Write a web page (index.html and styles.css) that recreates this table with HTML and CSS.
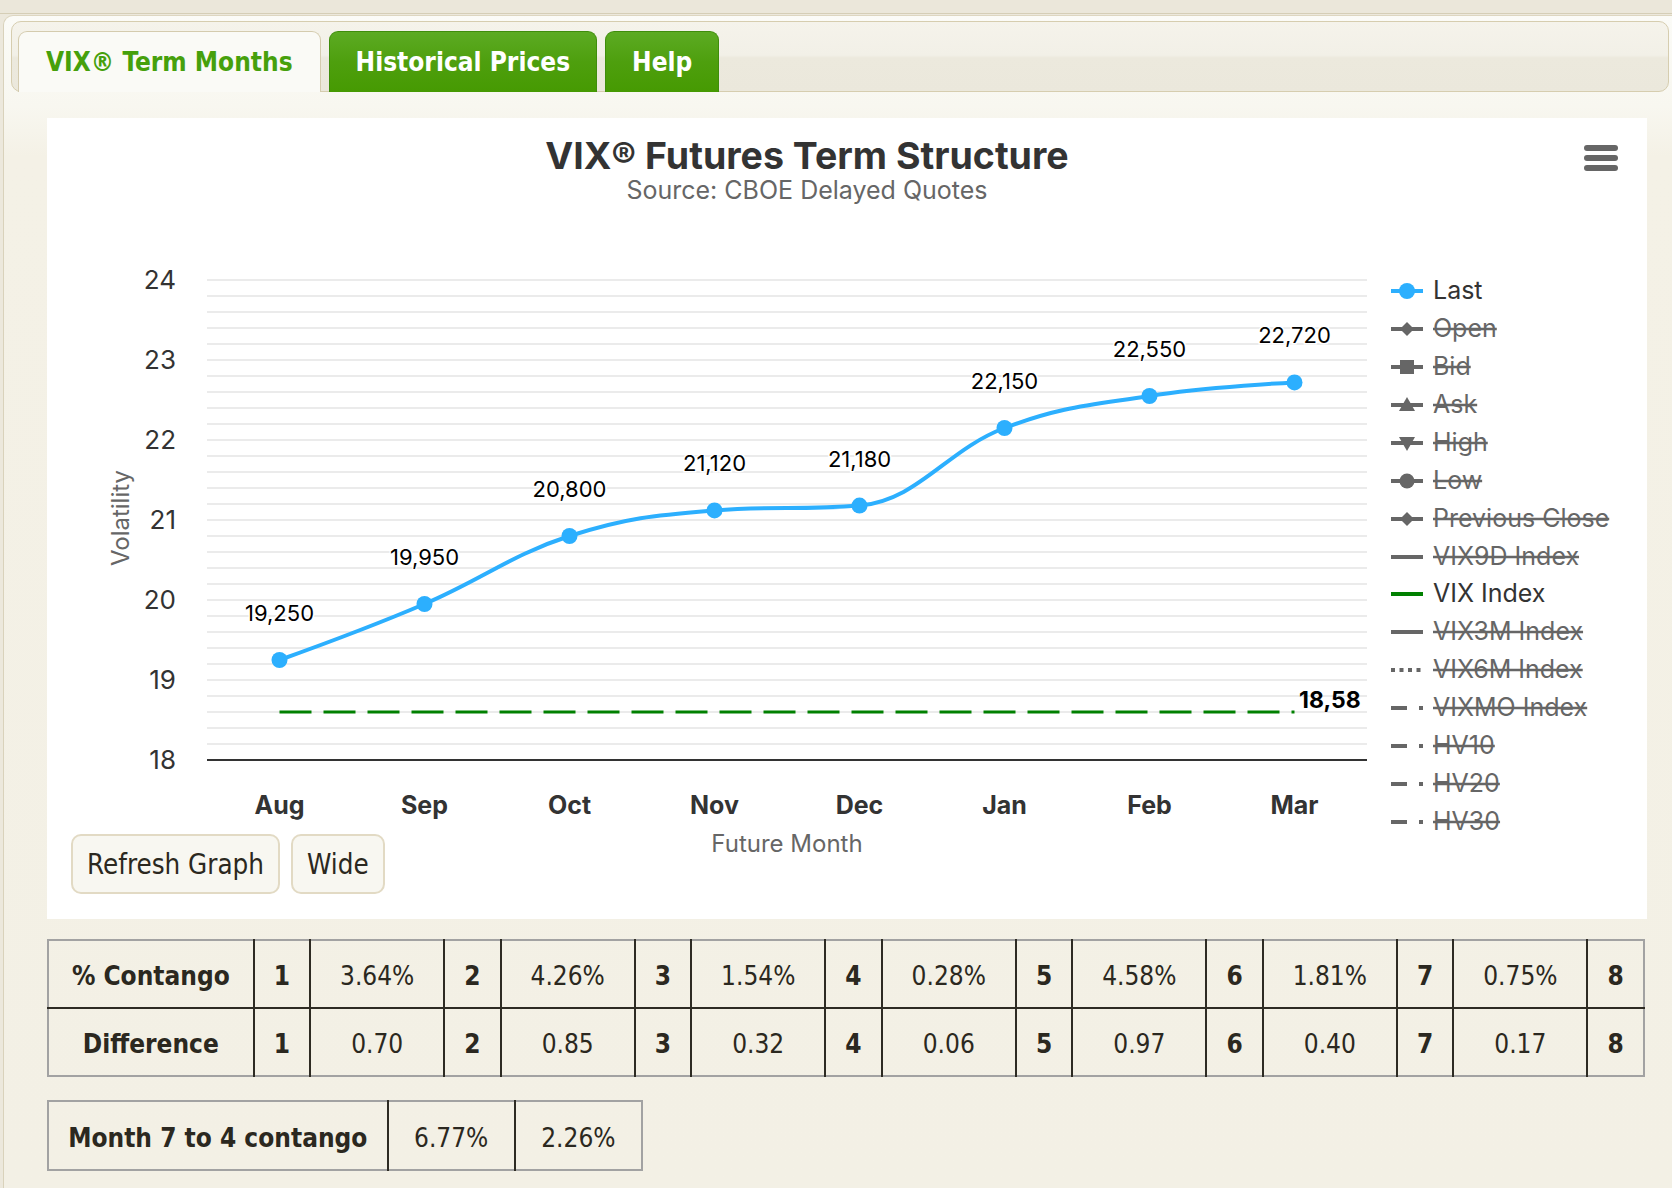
FILE: index.html
```html
<!DOCTYPE html>
<html lang="en">
<head>
<meta charset="utf-8">
<title>VIX Futures Term Structure</title>
<link rel="stylesheet" href="styles.css">
</head>
<body>
<div class="topbar"></div>
<div class="page">
  <nav class="tabbar">
    <a class="tab tab-active">VIX® Term Months</a>
    <a class="tab">Historical Prices</a>
    <a class="tab">Help</a>
  </nav>

  <div class="card">
    <svg class="chart" width="1600" height="716" viewBox="47 118 1600 716" xmlns="http://www.w3.org/2000/svg">
      <text class="ch-title" x="807" y="169" text-anchor="middle">VIX® Futures Term Structure</text>
      <text class="ch-sub" x="807" y="199" text-anchor="middle">Source: CBOE Delayed Quotes</text>
      <g class="menu">
        <rect x="1584" y="145" width="34" height="6" rx="3"/>
        <rect x="1584" y="155" width="34" height="6" rx="3"/>
        <rect x="1584" y="165" width="34" height="6" rx="3"/>
      </g>

      <g class="grid">
        <line x1="207" x2="1367" y1="280" y2="280"/>
        <line x1="207" x2="1367" y1="296" y2="296"/>
        <line x1="207" x2="1367" y1="312" y2="312"/>
        <line x1="207" x2="1367" y1="328" y2="328"/>
        <line x1="207" x2="1367" y1="344" y2="344"/>
        <line x1="207" x2="1367" y1="360" y2="360"/>
        <line x1="207" x2="1367" y1="376" y2="376"/>
        <line x1="207" x2="1367" y1="392" y2="392"/>
        <line x1="207" x2="1367" y1="408" y2="408"/>
        <line x1="207" x2="1367" y1="424" y2="424"/>
        <line x1="207" x2="1367" y1="440" y2="440"/>
        <line x1="207" x2="1367" y1="456" y2="456"/>
        <line x1="207" x2="1367" y1="472" y2="472"/>
        <line x1="207" x2="1367" y1="488" y2="488"/>
        <line x1="207" x2="1367" y1="504" y2="504"/>
        <line x1="207" x2="1367" y1="520" y2="520"/>
        <line x1="207" x2="1367" y1="536" y2="536"/>
        <line x1="207" x2="1367" y1="552" y2="552"/>
        <line x1="207" x2="1367" y1="568" y2="568"/>
        <line x1="207" x2="1367" y1="584" y2="584"/>
        <line x1="207" x2="1367" y1="600" y2="600"/>
        <line x1="207" x2="1367" y1="616" y2="616"/>
        <line x1="207" x2="1367" y1="632" y2="632"/>
        <line x1="207" x2="1367" y1="648" y2="648"/>
        <line x1="207" x2="1367" y1="664" y2="664"/>
        <line x1="207" x2="1367" y1="680" y2="680"/>
        <line x1="207" x2="1367" y1="696" y2="696"/>
        <line x1="207" x2="1367" y1="712" y2="712"/>
        <line x1="207" x2="1367" y1="728" y2="728"/>
        <line x1="207" x2="1367" y1="744" y2="744"/>
      </g>
      <line class="axis" x1="207" x2="1367" y1="760" y2="760"/>

      <g class="ylab">
        <text x="176" y="289">24</text>
        <text x="176" y="369">23</text>
        <text x="176" y="449">22</text>
        <text x="176" y="529">21</text>
        <text x="176" y="609">20</text>
        <text x="176" y="689">19</text>
        <text x="176" y="769">18</text>
      </g>
      <text class="ytitle" x="0" y="0" transform="translate(129 518) rotate(-90)" text-anchor="middle">Volatility</text>

      <g class="xlab">
        <text x="279.5" y="814">Aug</text>
        <text x="424.5" y="814">Sep</text>
        <text x="569.5" y="814">Oct</text>
        <text x="714.5" y="814">Nov</text>
        <text x="859.5" y="814">Dec</text>
        <text x="1004.5" y="814">Jan</text>
        <text x="1149.5" y="814">Feb</text>
        <text x="1294.5" y="814">Mar</text>
      </g>
      <text class="xtitle" x="787" y="852" text-anchor="middle">Future Month</text>

      <line class="vix" x1="279.5" x2="1294.5" y1="712" y2="712"/>
      <text class="vix-lab" x="1299" y="708">18,58</text>

      <path class="series" d="M279.5 660 C279.5 660 366.5 628.8 424.5 604 C482.5 579.2 511.5 554.72 569.5 536 C627.5 517.28 656.5 515.2 714.5 510.4 C772.5 505.6 801.5 510.4 859.5 505.6 C917.5 500.8 946.5 449.92 1004.5 428 C1062.5 406.08 1091.5 405.12 1149.5 396 C1207.5 386.88 1294.5 382.4 1294.5 382.4"/>
      <g class="markers">
        <circle cx="279.5" cy="660" r="8"/>
        <circle cx="424.5" cy="604" r="8"/>
        <circle cx="569.5" cy="536" r="8"/>
        <circle cx="714.5" cy="510.4" r="8"/>
        <circle cx="859.5" cy="505.6" r="8"/>
        <circle cx="1004.5" cy="428" r="8"/>
        <circle cx="1149.5" cy="396" r="8"/>
        <circle cx="1294.5" cy="382.4" r="8"/>
      </g>
      <g class="dlab">
        <text x="279.5" y="621">19,250</text>
        <text x="424.5" y="565">19,950</text>
        <text x="569.5" y="497">20,800</text>
        <text x="714.5" y="471">21,120</text>
        <text x="859.5" y="467">21,180</text>
        <text x="1004.5" y="389">22,150</text>
        <text x="1149.5" y="357">22,550</text>
        <text x="1294.5" y="343">22,720</text>
      </g>

      <g class="legend">
        <line class="lg-blue" x1="1391" x2="1423" y1="291" y2="291"/>
        <circle class="fill-blue" cx="1407" cy="291" r="8"/>
        <text class="lg-on" x="1433" y="299">Last</text>

        <line x1="1391" x2="1423" y1="329" y2="329"/>
        <polygon class="fill-gray" points="1407,322 1414,329 1407,336 1400,329"/>
        <text class="lg-off" x="1433" y="337">Open</text>

        <line x1="1391" x2="1423" y1="367" y2="367"/>
        <rect class="fill-gray" x="1400" y="360" width="14" height="14"/>
        <text class="lg-off" x="1433" y="375">Bid</text>

        <line x1="1391" x2="1423" y1="405" y2="405"/>
        <polygon class="fill-gray" points="1407,397 1415,411 1399,411"/>
        <text class="lg-off" x="1433" y="413">Ask</text>

        <line x1="1391" x2="1423" y1="443" y2="443"/>
        <polygon class="fill-gray" points="1399,437 1415,437 1407,451"/>
        <text class="lg-off" x="1433" y="451">High</text>

        <line x1="1391" x2="1423" y1="481" y2="481"/>
        <circle class="fill-gray" cx="1407" cy="481" r="7.5"/>
        <text class="lg-off" x="1433" y="489">Low</text>

        <line x1="1391" x2="1423" y1="519" y2="519"/>
        <polygon class="fill-gray" points="1407,512 1414,519 1407,526 1400,519"/>
        <text class="lg-off" x="1433" y="527">Previous Close</text>

        <line x1="1391" x2="1423" y1="557" y2="557"/>
        <text class="lg-off" x="1433" y="565">VIX9D Index</text>

        <line class="lg-green" x1="1391" x2="1423" y1="594" y2="594"/>
        <text class="lg-on" x="1433" y="602">VIX Index</text>

        <line x1="1391" x2="1423" y1="632" y2="632"/>
        <text class="lg-off" x="1433" y="640">VIX3M Index</text>

        <line class="lg-dot" x1="1391" x2="1423" y1="670" y2="670"/>
        <text class="lg-off" x="1433" y="678">VIX6M Index</text>

        <line class="lg-dashdot" x1="1391" x2="1423" y1="708" y2="708"/>
        <text class="lg-off" x="1433" y="716">VIXMO Index</text>

        <line class="lg-dashdot" x1="1391" x2="1423" y1="746" y2="746"/>
        <text class="lg-off" x="1433" y="754">HV10</text>

        <line class="lg-dashdot" x1="1391" x2="1423" y1="784" y2="784"/>
        <text class="lg-off" x="1433" y="792">HV20</text>

        <line class="lg-dashdot" x1="1391" x2="1423" y1="822" y2="822"/>
        <text class="lg-off" x="1433" y="830">HV30</text>
      </g>
    </svg>
    <div class="btn-row">
      <button class="btn">Refresh Graph</button>
      <button class="btn">Wide</button>
    </div>
  </div>

  <table class="stats">
    <colgroup>
      <col class="c-label">
      <col class="c-num"><col class="c-val">
      <col class="c-num"><col class="c-val">
      <col class="c-num"><col class="c-val">
      <col class="c-num"><col class="c-val">
      <col class="c-num"><col class="c-val">
      <col class="c-num"><col class="c-val">
      <col class="c-num"><col class="c-val">
      <col class="c-num">
    </colgroup>
    <tr>
      <th>% Contango</th>
      <th>1</th><td>3.64%</td>
      <th>2</th><td>4.26%</td>
      <th>3</th><td>1.54%</td>
      <th>4</th><td>0.28%</td>
      <th>5</th><td>4.58%</td>
      <th>6</th><td>1.81%</td>
      <th>7</th><td>0.75%</td>
      <th>8</th>
    </tr>
    <tr>
      <th>Difference</th>
      <th>1</th><td>0.70</td>
      <th>2</th><td>0.85</td>
      <th>3</th><td>0.32</td>
      <th>4</th><td>0.06</td>
      <th>5</th><td>0.97</td>
      <th>6</th><td>0.40</td>
      <th>7</th><td>0.17</td>
      <th>8</th>
    </tr>
  </table>

  <table class="stats stats-small">
    <colgroup>
      <col class="c-wide"><col class="c-pct"><col class="c-pct">
    </colgroup>
    <tr>
      <th>Month 7 to 4 contango</th>
      <td>6.77%</td>
      <td>2.26%</td>
    </tr>
  </table>
</div>
</body>
</html>
```

FILE: styles.css
```css
html, body {
  margin: 0;
  padding: 0;
}

body {
  background: #ece8dc;
  font-family: "DejaVu Sans Condensed", "DejaVu Sans", sans-serif;
  font-stretch: condensed;
  color: #2b2820;
}

.topbar {
  height: 13px;
  background: #ebe7da;
  border-bottom: 1px solid #d5ceb6;
}

.page {
  margin: 1px 0 0 3px;
  padding: 5px 3px 17px 7px;
  border-top: 1px solid #ddd6c0;
  border-left: 1px solid #d9d2bb;
  border-radius: 10px 0 0 0;
  background: linear-gradient(#fbfbf7 0, #f8f7f0 90px, #f4f1e6 140px, #f3f0e5 100%);
}

/* ---------- tabs ---------- */
.tabbar {
  display: flex;
  align-items: flex-end;
  gap: 8px;
  height: 61px;
  padding: 8px 0 0 6px;
  border: 1px solid #d6cdaf;
  border-radius: 10px;
  background: linear-gradient(#f5f3eb 0, #f2f0e7 48%, #ece9dd 52%, #ebe8dc 100%);
}

.tab {
  display: flex;
  align-items: center;
  height: 60px;
  margin-bottom: -1px;
  padding: 0 26px;
  border: 1px solid #3f8d0c;
  border-bottom: none;
  border-radius: 9px 9px 0 0;
  background: linear-gradient(#5cab23 0, #4e9f0e 50%, #469a02 100%);
  color: #fff;
  font-weight: bold;
  font-size: 26px;
  cursor: pointer;
}

.tab-active {
  padding: 0 27px;
  border-color: #d4cbae;
  background: #fafaf6;
  color: #46a00c;
}

/* ---------- chart card ---------- */
.card {
  box-sizing: border-box;
  height: 801px;
  margin: 26px 22px 0 36px;
  background: #fff;
}

.chart {
  display: block;
  overflow: visible;
  font-family: Inter, "Liberation Sans", sans-serif;
}

.ch-title {
  font-size: 37.5px;
  font-weight: 700;
  fill: #333;
}

.ch-sub {
  font-size: 25px;
  fill: #666;
}

.menu rect {
  fill: #666;
}

.grid line {
  stroke: #e4e4e4;
  stroke-width: 1.5;
}

.axis {
  stroke: #333;
  stroke-width: 2;
}

.ylab text {
  font-size: 26px;
  fill: #333;
  text-anchor: end;
}

.ytitle,
.xtitle {
  font-size: 24px;
  fill: #666;
}

.xlab text {
  font-size: 25px;
  font-weight: 700;
  fill: #333;
  text-anchor: middle;
}

.vix {
  stroke: #008000;
  stroke-width: 3;
  stroke-dasharray: 32 12;
}

.vix-lab {
  font-size: 23px;
  font-weight: 700;
  fill: #000;
}

.series {
  fill: none;
  stroke: #2caffe;
  stroke-width: 4;
  stroke-linecap: round;
}

.markers circle {
  fill: #2caffe;
}

.dlab text {
  font-size: 22px;
  fill: #000;
  text-anchor: middle;
  stroke: #fff;
  stroke-width: 3;
  paint-order: stroke;
}

.legend line {
  stroke: #666;
  stroke-width: 4;
}

.legend .lg-blue {
  stroke: #2caffe;
}

.legend .lg-green {
  stroke: #008000;
}

.legend .lg-dot {
  stroke-dasharray: 4 4.5;
}

.legend .lg-dashdot {
  stroke-dasharray: 16 12 4 100;
}

.fill-blue {
  fill: #2caffe;
}

.fill-gray {
  fill: #666;
}

.legend text {
  font-size: 25px;
}

.lg-on {
  fill: #333;
}

.lg-off {
  fill: #666;
  text-decoration: line-through;
}

/* ---------- buttons ---------- */
.btn-row {
  display: flex;
  gap: 11px;
  padding-left: 24px;
}

.btn {
  height: 60px;
  padding: 0 14px;
  border: 2px solid #e2dac4;
  border-radius: 10px;
  background: #f8f7f1;
  color: #2b2820;
  font-family: inherit;
  font-stretch: condensed;
  font-size: 27.5px;
}

/* ---------- tables ---------- */
.stats {
  width: 1598px;
  margin: 20px 0 0 36px;
  border-collapse: collapse;
  table-layout: fixed;
  border: 2px solid #a2a2a2;
  font-size: 26px;
}

.stats th,
.stats td {
  height: 62px;
  padding: 4px 0 0;
  text-align: center;
}

.stats th {
  font-weight: bold;
}

.stats td {
  font-weight: normal;
}

.stats th + th,
.stats th + td,
.stats td + th,
.stats td + td {
  border-left: 2px solid #2e2b23;
}

.stats tr + tr th,
.stats tr + tr td {
  border-top: 2px solid #2e2b23;
}

.c-label { width: 204px; }
.c-num { width: 56px; }
.c-val { width: 133px; }

.stats-small {
  width: 596px;
  margin-top: 23px;
}

.stats-small th,
.stats-small td {
  height: 63px;
}

.c-wide { width: 339px; }
.c-pct { width: 127px; }
```
